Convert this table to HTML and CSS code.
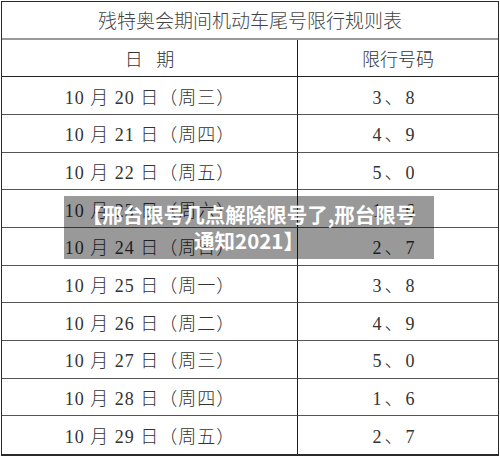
FILE: index.html
```html
<!DOCTYPE html>
<html lang="zh-CN">
<head>
<meta charset="utf-8">
<title>残特奥会期间机动车尾号限行规则表</title>
<link rel="stylesheet" href="styles.css">
</head>
<body>
<div class="page">
  <div class="table">
    <div class="cell title">残特奥会期间机动车尾号限行规则表</div>
    <div class="cell left head">日&nbsp;&nbsp;&nbsp;期</div>
    <div class="cell right head">限行号码</div>
    <div class="cell left date">10 月 20 日（周三）</div>
    <div class="cell right num">3、8</div>
    <div class="cell left date">10 月 21 日（周四）</div>
    <div class="cell right num">4、9</div>
    <div class="cell left date">10 月 22 日（周五）</div>
    <div class="cell right num">5、0</div>
    <div class="cell left date">10 月 23 日（周六）</div>
    <div class="cell right num">1、6</div>
    <div class="cell left date">10 月 24 日（周日）</div>
    <div class="cell right num">2、7</div>
    <div class="cell left date">10 月 25 日（周一）</div>
    <div class="cell right num">3、8</div>
    <div class="cell left date">10 月 26 日（周二）</div>
    <div class="cell right num">4、9</div>
    <div class="cell left date">10 月 27 日（周三）</div>
    <div class="cell right num">5、0</div>
    <div class="cell left date">10 月 28 日（周四）</div>
    <div class="cell right num">1、6</div>
    <div class="cell left date last">10 月 29 日（周五）</div>
    <div class="cell right num last">2、7</div>
  </div>
  <div class="caption">【邢台限号几点解除限号了,邢台限号<br>通知2021】</div>
</div>
</body>
</html>
```

FILE: styles.css
```css
html, body {
  margin: 0;
  padding: 0;
  background: #ffffff;
}

.page {
  position: relative;
  width: 500px;
  height: 456px;
  overflow: hidden;
}

.table {
  margin: 1px 1px 0 1px;
  width: 498px;
  height: 455px;
  box-sizing: border-box;
  border: 1px solid #2a2a2a;
  border-bottom: 2px solid #2a2a2a;
  display: grid;
  grid-template-columns: 296px 1fr;
  grid-template-rows: repeat(12, 1fr);
  font-family: "Liberation Serif", "Noto Sans CJK SC", serif;
  font-weight: 300;
  font-size: 18px;
  color: #333333;
}

.cell {
  display: flex;
  align-items: center;
  justify-content: center;
  box-sizing: border-box;
  border-bottom: 1px solid #555555;
}

.cell.left {
  border-right: 1px solid #1e1e1e;
}

.cell.date {
  letter-spacing: 1px;
  padding-left: 1px;
}

.cell.num {
  letter-spacing: 3px;
  padding-right: 6px;
}

.cell.title {
  grid-column: 1 / span 2;
  font-size: 19px;
  color: #444444;
  border-bottom: 2px solid #999999;
}

.cell.head {
  border-bottom-color: #222222;
}

.cell.last {
  border-bottom: none;
}

.caption {
  position: absolute;
  left: 64px;
  top: 196px;
  width: 370px;
  height: 63px;
  box-sizing: border-box;
  padding-top: 5px;
  background: rgba(0, 0, 0, 0.4);
  color: #ffffff;
  font-family: "Noto Sans CJK SC", "Noto Sans", sans-serif;
  font-weight: 700;
  font-size: 20.5px;
  line-height: 26px;
  text-align: center;
}
```
